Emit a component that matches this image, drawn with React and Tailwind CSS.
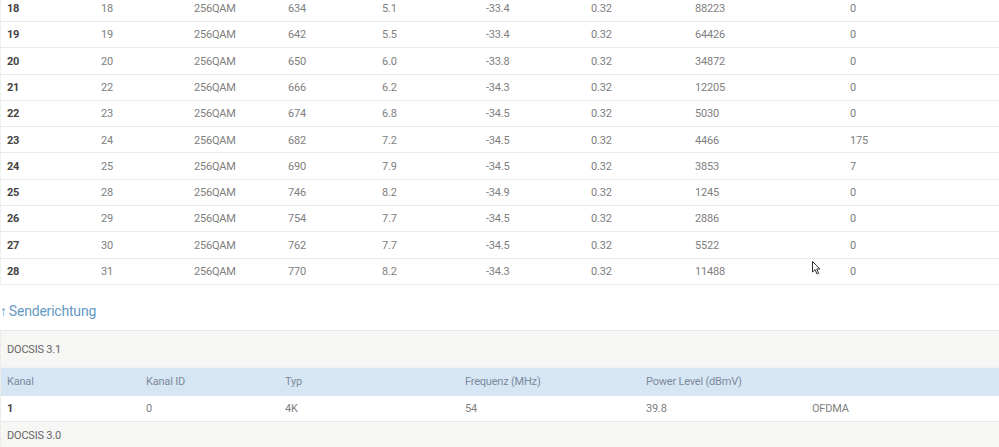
import React from "react";

const rows = [
  ["18", "18", "256QAM", "634", "5.1", "-33.4", "0.32", "88223", "0"],
  ["19", "19", "256QAM", "642", "5.5", "-33.4", "0.32", "64426", "0"],
  ["20", "20", "256QAM", "650", "6.0", "-33.8", "0.32", "34872", "0"],
  ["21", "22", "256QAM", "666", "6.2", "-34.3", "0.32", "12205", "0"],
  ["22", "23", "256QAM", "674", "6.8", "-34.5", "0.32", "5030", "0"],
  ["23", "24", "256QAM", "682", "7.2", "-34.5", "0.32", "4466", "175"],
  ["24", "25", "256QAM", "690", "7.9", "-34.5", "0.32", "3853", "7"],
  ["25", "28", "256QAM", "746", "8.2", "-34.9", "0.32", "1245", "0"],
  ["26", "29", "256QAM", "754", "7.7", "-34.5", "0.32", "2886", "0"],
  ["27", "30", "256QAM", "762", "7.7", "-34.5", "0.32", "5522", "0"],
  ["28", "31", "256QAM", "770", "8.2", "-34.3", "0.32", "11488", "0"],
];

const colW = [
  "w-[94px]",
  "w-[93px]",
  "w-[94px]",
  "w-[94px]",
  "w-[104px]",
  "w-[105px]",
  "w-[104px]",
  "w-[155px]",
  "flex-1",
];

const font = {
  fontFamily: '"Liberation Sans Narrow", Roboto, "Liberation Sans", sans-serif',
};

export default function App() {
  return (
    <div
      className="relative w-[999px] h-[447px] overflow-hidden bg-white"
      style={font}
    >
      <div className="-mt-[4.3px]">
        {rows.map((r, i) => (
          <div
            key={i}
            className="flex items-center h-[26.3px] pt-[2px] border-b border-[#e9e9e9] border-l border-l-[#f0f0f0] text-[11px] tracking-[-0.2px]"
          >
            {r.map((c, j) => (
              <div
                key={j}
                className={`${colW[j]} pl-[6px] ${
                  j === 0 ? "text-[#444] font-bold" : "text-[#808080]"
                }`}
              >
                {c}
              </div>
            ))}
          </div>
        ))}
      </div>

      <div className="h-[45px] flex items-center pt-[9px] text-[14px] tracking-[-0.2px] text-[#659ac4]">
        <span className="mr-[2px]">↑</span>
        <span>Senderichtung</span>
      </div>

      <div className="bg-[#f6f6f4] border-t border-[#e8e8e6] border-l border-l-[#ececea] text-[11px] tracking-[-0.2px]">
        <div className="h-[36px] flex items-center pt-[2px] pl-[6px] text-[#666]">
          DOCSIS 3.1
        </div>
        <div className="h-[29px] flex items-center pt-[1px] bg-[#d7e6f5] text-[#7a8a9a] border-t border-[#eef2f8]">
          <div className="w-[139px] pl-[6px]">Kanal</div>
          <div className="w-[139px] pl-[6px]">Kanal ID</div>
          <div className="w-[180px] pl-[6px]">Typ</div>
          <div className="w-[181px] pl-[6px]">Frequenz (MHz)</div>
          <div className="w-[166px] pl-[6px]">Power Level (dBmV)</div>
          <div className="flex-1 pl-[6px]"></div>
        </div>
        <div className="h-[26px] flex items-center pt-[1px] bg-white border-b border-[#e9e9e9] text-[#808080]">
          <div className="w-[139px] pl-[6px] text-[#444] font-bold">1</div>
          <div className="w-[139px] pl-[6px]">0</div>
          <div className="w-[180px] pl-[6px]">4K</div>
          <div className="w-[181px] pl-[6px]">54</div>
          <div className="w-[166px] pl-[6px]">39.8</div>
          <div className="flex-1 pl-[6px]">OFDMA</div>
        </div>
        <div className="h-[30px] flex items-start pt-[6px] pl-[6px] text-[#666]">
          DOCSIS 3.0
        </div>
      </div>

      <svg
        className="absolute left-[812px] top-[261px]"
        width="10"
        height="14"
        viewBox="0 0 10 14"
      >
        <path
          d="M0.5 0.5 L0.5 11 L3 8.6 L5 13 L6.6 12.3 L4.7 8 L8 8 Z"
          fill="#fff"
          stroke="#333"
          strokeWidth="1"
          strokeLinejoin="round"
        />
      </svg>
    </div>
  );
}
